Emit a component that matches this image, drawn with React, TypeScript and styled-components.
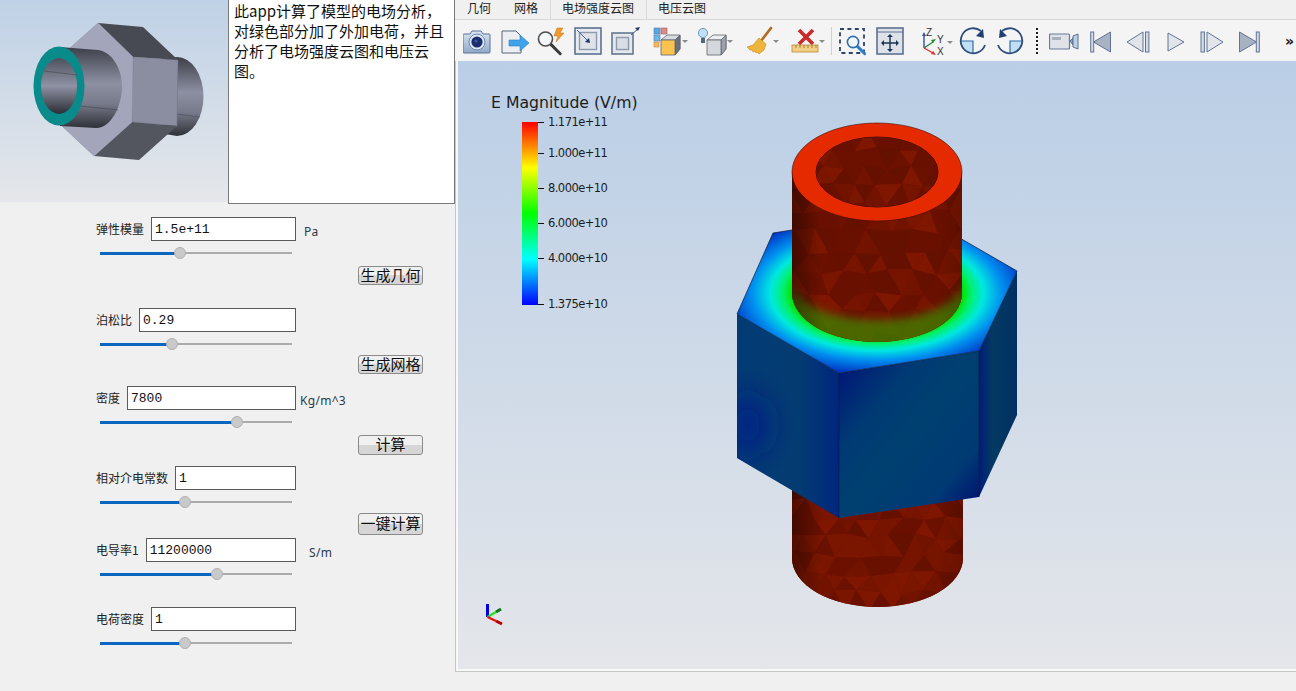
import React from 'react';
import styled, { createGlobalStyle } from 'styled-components';

const GlobalStyle = createGlobalStyle`
	html, body {
		margin: 0;
		padding: 0;
		background: #f0f0f0;
		overflow: hidden;
	}
`;

const CJK = `"Noto Sans CJK SC", "Noto Sans", sans-serif`;

const Page = styled.div`
	display: flex;
	width: 1296px;
	height: 691px;
	font-family: ${CJK};
	color: #1a1a1a;
`;

const LeftPane = styled.div`
	flex: 0 0 455px;
	display: flex;
	flex-direction: column;
`;

const TopRow = styled.div`
	display: flex;
	align-items: flex-start;
`;

const Thumb = styled.div`
	flex: 0 0 228px;
	height: 202px;
	background: linear-gradient(#bfd1e6, #e5e7ea);
	svg {
		display: block;
	}
`;

const Description = styled.div`
	box-sizing: border-box;
	width: 227px;
	height: 204px;
	padding: 1px 6px 0 5px;
	background: #fff;
	border: 1px solid #7a7a7a;
	border-top: none;
	font-size: 15px;
	line-height: 20px;
	color: #111;
	line-break: strict;
`;

const Form = styled.div`
	display: flex;
	flex-direction: column;
`;

const Row = styled.div<{ $top: number }>`
	display: flex;
	align-items: center;
	height: 24px;
	margin: ${(p) => p.$top}px 0 0 96px;
`;

const InputGroup = styled.div`
	flex: 0 0 200px;
	display: flex;
	align-items: center;
	gap: 7px;
`;

const Label = styled.label`
	flex: none;
	font-size: 12px;
	line-height: 16px;
	color: #222;
`;

const ValueInput = styled.input`
	flex: 1;
	min-width: 0;
	box-sizing: border-box;
	height: 24px;
	padding: 1px 3px 0;
	background: #fff;
	border: 1px solid #5a5a5a;
	border-radius: 0;
	outline: none;
	font-family: "Liberation Mono", monospace;
	font-size: 13px;
	color: #111;
`;

const Unit = styled.span<{ $left: number }>`
	margin: 5px 0 0 ${(p) => p.$left}px;
	font-family: "Noto Sans", sans-serif;
	font-size: 12px;
	letter-spacing: 0.3px;
	color: #2b3a4a;
	white-space: nowrap;
`;

const Slider = styled.div`
	display: flex;
	align-items: center;
	width: 192px;
	height: 12px;
	margin: 6px 0 0 100px;
`;

const SliderFill = styled.div<{ $pos: number }>`
	flex: 0 0 ${(p) => p.$pos}px;
	height: 3px;
	background: #0b66c0;
`;

const SliderHandle = styled.div`
	flex: 0 0 12px;
	height: 12px;
	margin: 0 -6px;
	box-sizing: border-box;
	position: relative;
	background: #c9c9c9;
	border: 1px solid #b0b0b0;
	border-radius: 50%;
`;

const SliderRest = styled.div`
	flex: 1;
	height: 2.5px;
	background: #ababab;
`;

const ActionRow = styled.div<{ $top: number }>`
	display: flex;
	justify-content: flex-end;
	width: 423px;
	margin-top: ${(p) => p.$top}px;
`;

const ActionButton = styled.button<{ $h: number }>`
	box-sizing: border-box;
	width: 65px;
	height: ${(p) => p.$h}px;
	padding: 0 0 4px;
	background: linear-gradient(#f0f0f0 0 50%, #d6d6d6 50% 100%);
	border: 1px solid #8a8a8a;
	border-radius: 3px;
	font-family: ${CJK};
	font-size: 15px;
	line-height: 1;
	color: #111;
`;

const RightPane = styled.div`
	flex: 1;
	display: flex;
	flex-direction: column;
	min-width: 0;
`;

const Tabs = styled.div`
	display: flex;
	height: 19px;
	padding-left: 1px;
	border-bottom: 1px solid #d8d8d8;
`;

const Tab = styled.div<{ $divided?: boolean }>`
	padding: 0 12px 0 11px;
	font-size: 12px;
	line-height: 16px;
	color: #222;
	border-left: ${(p) => (p.$divided ? '1px solid #d8d8d8' : 'none')};
`;

const Toolbar = styled.div`
	display: flex;
	align-items: center;
	height: 41px;
	padding-left: 8px;
	background: #f4f4f4;
`;

const Tool = styled.span<{ $left: number }>`
	flex: none;
	display: flex;
	margin-left: ${(p) => p.$left}px;
`;

const ThinDivider = styled.span`
	flex: none;
	width: 1px;
	height: 28px;
	margin-left: 6px;
	background: #d0d0d0;
`;

const DottedDivider = styled.span`
	flex: none;
	width: 0;
	height: 26px;
	margin-left: 12px;
	border-left: 2px dotted #1a1a1a;
`;

const More = styled.span`
	margin-left: 25px;
	font-family: "DejaVu Sans", sans-serif;
	font-size: 14px;
	font-weight: 700;
	line-height: 1;
	color: #111;
`;

const ViewportFrame = styled.div`
	box-sizing: border-box;
	height: 611px;
	padding: 0 0 2px 2px;
	background: #f8f8f8;
	border-left: 1px solid #c6c6c6;
	border-bottom: 1px solid #c6c6c6;
`;

const Viewport = styled.div`
	position: relative;
	height: 608px;
	overflow: hidden;
	background: linear-gradient(#bacee6, #e4e6ea);
	svg {
		position: absolute;
		left: 0;
		top: 0;
	}
`;

const Legend = styled.div`
	position: absolute;
	left: 33px;
	top: 33px;
	font-family: "DejaVu Sans", sans-serif;
	color: #1c1c1c;
`;

const LegendTitle = styled.div`
	font-size: 15.7px;
	line-height: 18px;
	white-space: nowrap;
`;

const LegendBody = styled.div`
	position: relative;
	width: 120px;
	height: 183px;
	margin: 10px 0 0 31px;
`;

const ColorBar = styled.div`
	width: 16px;
	height: 100%;
	background: linear-gradient(#ff0000, #ffff00 25%, #00ff00 50%, #00ffff 75%, #0000ff);
`;

const Tick = styled.div<{ $y: number }>`
	position: absolute;
	left: 16px;
	top: ${(p) => p.$y - 8}px;
	display: flex;
	align-items: center;
	gap: 4px;
	height: 16px;
	font-size: 11.5px;
	letter-spacing: -0.55px;
	white-space: nowrap;
	&::before {
		content: '';
		width: 6px;
		height: 1px;
		background: #111;
	}
`;

type IconProps = { w: number; children: React.ReactNode };

const Icon = ({ w, children }: IconProps) => (
	<svg width={w} height={30} viewBox={`0 0 ${w} 30`} fill="none">
		{children}
	</svg>
);

const Caret = ({ x }: { x: number }) => <path d={`M${x} 14h6l-3 3z`} fill="#8a8a8a" />;

const Cube = ({ x, y, face, side, top }: { x: number; y: number; face: string; side: string; top: string }) => (
	<g stroke="#5d6470" strokeWidth="0.8" strokeLinejoin="round">
		<path d={`M${x} ${y + 5}l6-5h13v14l-5 6v-15z`} fill={top} />
		<path d={`M${x + 19} ${y}v14l-5 6v-15z`} fill={side} />
		<rect x={x} y={y + 5} width={14} height={15} fill={face} />
	</g>
);

const Magnifier = ({ x, y, r, lens, handle }: { x: number; y: number; r: number; lens: string; handle: string }) => (
	<g>
		<path d={`M${x + r * 0.7} ${y + r * 0.7}L${x + r * 2.1} ${y + r * 2.1}`} stroke={handle} strokeWidth="3" strokeLinecap="round" />
		<circle cx={x} cy={y} r={r} fill="#f4f7fa" stroke={lens} strokeWidth="1.6" />
	</g>
);

const CameraIcon = () => (
	<Icon w={28}>
		<defs>
			<linearGradient id="cam" x1="0" y1="0" x2="0" y2="1">
				<stop offset="0" stopColor="#dbe6f1" />
				<stop offset="1" stopColor="#8fa9cb" />
			</linearGradient>
		</defs>
		<path d="M1 8h6l2-3h9l2 3h6a1 1 0 0 1 1 1v17a1 1 0 0 1-1 1H1a1 1 0 0 1-1-1V9a1 1 0 0 1 1-1z" fill="url(#cam)" stroke="#5b7395" />
		<circle cx="14" cy="16" r="8" fill="#dfe8f2" stroke="#6f87a8" />
		<circle cx="14" cy="16" r="5.6" fill="#1b2f6e" />
		<circle cx="13" cy="15" r="1.6" fill="#3f5aa0" />
	</Icon>
);

const ExportIcon = () => (
	<Icon w={28}>
		<path d="M1 5h14l5 5v17H1z" fill="#eceef1" stroke="#5a6678" />
		<path d="M8 14h11v-5l9 8-9 8v-5H8z" fill="#3fa2ea" stroke="#2f7fc2" strokeWidth="0.6" />
	</Icon>
);

const ZoomBoltIcon = () => (
	<Icon w={29}>
		<path d="M20 2h6l-3 5h4l-8 9 2-6h-4z" fill="#f09a2e" stroke="#c77414" strokeWidth="0.5" />
		<Magnifier x={8.5} y={13} r={7} lens="#4d4d4d" handle="#3a3a3a" />
	</Icon>
);

const ZoomInBoxIcon = () => (
	<Icon w={28}>
		<rect x="1" y="2" width="26" height="26" fill="#e8ebef" stroke="#5d7190" strokeWidth="1.6" />
		<rect x="5.5" y="6.5" width="17" height="17" fill="#dfe3e8" stroke="#8d9aae" strokeWidth="1.4" />
		<path d="M3 4L14 15" stroke="#45648f" strokeWidth="1" />
		<path d="M16 17l-1-5-4 4z" fill="#1c3768" />
	</Icon>
);

const ZoomOutBoxIcon = () => (
	<Icon w={29}>
		<rect x="1" y="7" width="21" height="21" fill="#e4e7eb" stroke="#65788f" strokeWidth="1.6" />
		<rect x="5.5" y="11.5" width="12" height="12" fill="#d9dee4" stroke="#8d9aae" strokeWidth="1.4" />
		<path d="M20 9L27 3" stroke="#45648f" strokeWidth="1" />
		<path d="M29 1l-5 1 3 3z" fill="#1c3768" />
	</Icon>
);

const ColorCubeIcon = () => (
	<Icon w={35}>
		<rect x="1" y="2" width="6" height="6" fill="#5aa6e0" stroke="#4a7eb0" strokeWidth="0.6" />
		<rect x="8" y="2" width="6" height="6" fill="#d98a8a" stroke="#a86060" strokeWidth="0.6" />
		<rect x="1" y="9" width="6" height="6" fill="#6db6e8" stroke="#4a7eb0" strokeWidth="0.6" />
		<rect x="1" y="16" width="5" height="5" fill="#f2b560" stroke="#c88a3a" strokeWidth="0.6" />
		<Cube x={8} y={9} face="#fbc24f" side="#6a6f78" top="#d7dadf" />
		<Caret x={29} />
	</Icon>
);

const LightCubeIcon = () => (
	<Icon w={35}>
		<circle cx="5" cy="7" r="4.6" fill="#bfe0f7" stroke="#6e9cc0" />
		<rect x="3" y="12" width="4" height="5" fill="#55657a" />
		<Cube x={9} y={9} face="#d4d8dc" side="#9da2aa" top="#eceef0" />
		<Caret x={29} />
	</Icon>
);

const BroomIcon = () => (
	<Icon w={33}>
		<path d="M25 2L15 15" stroke="#b26a1f" strokeWidth="2.6" strokeLinecap="round" />
		<path d="M13 12l7 6-2 6-5 4-2-2-1 1-1-2-2 1-1-2-2 0-3-3 6-2z" fill="#efb43c" stroke="#c98b1f" strokeWidth="0.6" />
		<Caret x={27} />
	</Icon>
);

const RulerIcon = () => (
	<Icon w={34}>
		<path d="M8 4l14 14M22 4L8 18" stroke="#c92a2a" strokeWidth="3.6" />
		<rect x="1" y="19" width="26" height="7" fill="#f2cf86" stroke="#b98a33" strokeWidth="0.8" />
		<path d="M5 19v3M9 19v3M13 19v3M17 19v3M21 19v3M25 19v3" stroke="#9a6f25" strokeWidth="0.8" />
		<Caret x={28} />
	</Icon>
);

const DashZoomIcon = () => (
	<Icon w={27}>
		<rect x="1" y="3" width="24" height="24" stroke="#2f4368" strokeWidth="1.8" strokeDasharray="4 3.4" />
		<Magnifier x={14} y={16} r={5.6} lens="#2f6db0" handle="#2f7fc8" />
	</Icon>
);

const FitIcon = () => (
	<Icon w={28}>
		<rect x="1" y="2" width="26" height="26" fill="#dde1e8" stroke="#5d7190" strokeWidth="1.6" />
		<path d="M1 6h26" stroke="#5d7190" strokeWidth="1" />
		<path d="M14 10v14M7 17h14" stroke="#1f3355" strokeWidth="1.4" />
		<path d="M14 8l-3 3h6zM14 26l-3-3h6zM5 17l3-3v6zM23 17l-3-3v6z" fill="#1f3355" />
	</Icon>
);

const AxesIcon = () => (
	<Icon w={33}>
		<path d="M3 22V9" stroke="#2f4fae" strokeWidth="1.4" />
		<path d="M3 6L1 10h4z" fill="#2f4fae" />
		<path d="M3 22l9-6" stroke="#1e8a3c" strokeWidth="1.4" />
		<path d="M15 13l-5 1 2 3z" fill="#1e8a3c" />
		<path d="M3 22l9 5" stroke="#d93030" strokeWidth="1.4" />
		<path d="M15 29l-5-1 2-3z" fill="#d93030" />
		<text x="5" y="10" fontFamily="Liberation Sans" fontSize="10" fill="#333">Z</text>
		<text x="16" y="17" fontFamily="Liberation Sans" fontSize="10" fill="#333">Y</text>
		<text x="16" y="29" fontFamily="Liberation Sans" fontSize="10" fill="#333">X</text>
		<path d="M26 15h6l-3 3z" fill="#8a8a8a" />
	</Icon>
);

const RotateIcon = ({ mirror }: { mirror?: boolean }) => (
	<Icon w={27}>
		<g transform={mirror ? 'translate(27 0) scale(-1 1)' : undefined}>
			<path d="M14 15H1.5a12.5 12.5 0 0 0 12.5 12.5z" fill="#bfe0f5" />
			<path d="M1.5 15H14V27" stroke="#2f6fa8" strokeWidth="1.2" />
			<path d="M22 5A12.5 12.5 0 1 0 26 19" stroke="#2e4d78" strokeWidth="1.8" />
			<path d="M25 12l-8-2 7-7z" fill="#1f3f72" />
		</g>
	</Icon>
);

const VideoIcon = () => (
	<Icon w={30}>
		<rect x="0.5" y="8" width="20" height="15" rx="1" fill="#dfe3e9" stroke="#667a98" strokeWidth="1.2" />
		<rect x="3" y="11" width="9" height="3" fill="#a9b1bd" />
		<path d="M21 15l3-3v7z" fill="#8ea7c8" stroke="#5d7190" />
		<path d="M24 10l5-2v15l-5-2z" fill="#bcd0e6" stroke="#5d7190" />
	</Icon>
);

const barStroke = '#5f7498';

const FirstIcon = () => (
	<Icon w={21}>
		<rect x="0.7" y="6" width="3" height="20" fill="#d5dae2" stroke={barStroke} />
		<path d="M3.5 16L20.5 6v20z" fill="#a9b2c0" stroke={barStroke} />
	</Icon>
);

const PrevIcon = () => (
	<Icon w={24}>
		<path d="M1 16L17 6v20z" fill="#e1e5ea" stroke={barStroke} />
		<rect x="19.5" y="6" width="3.4" height="20" fill="#d5dae2" stroke={barStroke} />
	</Icon>
);

const PlayIcon = () => (
	<Icon w={18}>
		<path d="M1 7L17 16 1 25z" fill="#e1e5ea" stroke={barStroke} />
	</Icon>
);

const NextIcon = () => (
	<Icon w={24}>
		<rect x="1" y="6" width="3.4" height="20" fill="#d5dae2" stroke={barStroke} />
		<path d="M7 6l16 10-16 10z" fill="#e1e5ea" stroke={barStroke} />
	</Icon>
);

const LastIcon = () => (
	<Icon w={21}>
		<path d="M0.5 6l17 10-17 10z" fill="#a9b2c0" stroke={barStroke} />
		<rect x="17.3" y="6" width="3" height="20" fill="#d5dae2" stroke={barStroke} />
	</Icon>
);

const firstTools = [
	{ left: 0, icon: <CameraIcon /> },
	{ left: 10, icon: <ExportIcon /> },
	{ left: 8, icon: <ZoomBoltIcon /> },
	{ left: 8, icon: <ZoomInBoxIcon /> },
	{ left: 9, icon: <ZoomOutBoxIcon /> },
	{ left: 13, icon: <ColorCubeIcon /> },
	{ left: 10, icon: <LightCubeIcon /> },
	{ left: 13, icon: <BroomIcon /> },
	{ left: 12, icon: <RulerIcon /> },
];

const secondTools = [
	{ left: 7, icon: <DashZoomIcon /> },
	{ left: 10, icon: <FitIcon /> },
	{ left: 17, icon: <AxesIcon /> },
	{ left: 5, icon: <RotateIcon /> },
	{ left: 11, icon: <RotateIcon mirror /> },
];

const thirdTools = [
	{ left: 11, icon: <VideoIcon /> },
	{ left: 11, icon: <FirstIcon /> },
	{ left: 15, icon: <PrevIcon /> },
	{ left: 17, icon: <PlayIcon /> },
	{ left: 15, icon: <NextIcon /> },
	{ left: 15, icon: <LastIcon /> },
];

const params = [
	{ label: '弹性模量', value: '1.5e+11', top: 13, pos: 80, unit: 'Pa', unitLeft: 8, action: '生成几何', actionTop: 7, actionH: 19 },
	{ label: '泊松比', value: '0.29', top: 23, pos: 72, action: '生成网格', actionTop: 5, actionH: 19 },
	{ label: '密度', value: '7800', top: 12, pos: 137, unit: 'Kg/m^3', unitLeft: 4, action: '计算', actionTop: 7, actionH: 20 },
	{ label: '相对介电常数', value: '1', top: 11, pos: 85, action: '一键计算', actionTop: 5, actionH: 22 },
	{ label: '电导率1', value: '11200000', top: 3, pos: 117, unit: 'S/m', unitLeft: 13 },
	{ label: '电荷密度', value: '1', top: 27, pos: 85 },
];

const ticks = [
	{ y: 0, text: '1.171e+11' },
	{ y: 31, text: '1.000e+11' },
	{ y: 66, text: '8.000e+10' },
	{ y: 101, text: '6.000e+10' },
	{ y: 136, text: '4.000e+10' },
	{ y: 182, text: '1.375e+10' },
];

const ThumbModel = () => (
	<svg width={228} height={202} viewBox="0 0 228 202">
		<defs>
			<linearGradient id="cyl" x1="0" y1="0" x2="0" y2="1">
				<stop offset="0" stopColor="#3d4049" />
				<stop offset="0.45" stopColor="#8d90a2" />
				<stop offset="0.7" stopColor="#777a8a" />
				<stop offset="1" stopColor="#2f3138" />
			</linearGradient>
			<linearGradient id="bore" x1="0" y1="0" x2="0" y2="1">
				<stop offset="0" stopColor="#4e515c" />
				<stop offset="0.5" stopColor="#8f92a4" />
				<stop offset="1" stopColor="#2b2d34" />
			</linearGradient>
		</defs>
		<path d="M177 57A26.5 39.5 0 0 1 177 136L165 134V58Z" fill="url(#cyl)" />
		<path d="M176 114l24 3" stroke="#4a4c56" strokeWidth="0.6" />
		<path d="M98 23L143 27 178 60 133 57z" fill="#474a53" />
		<path d="M133 57L178 60 177 126 132 122z" fill="#8b8ea0" stroke="#6b6e7e" strokeWidth="0.5" />
		<path d="M132 122L177 126 139 160 94 156z" fill="#54565f" />
		<path d="M98 23L133 57 132 122 94 156 62 126 70 48z" fill="#a3a6ba" stroke="#8a8d9e" strokeWidth="0.5" />
		<path d="M60 47L98 50C113 52 122 70 122 87S112 128 96 128L60 126z" fill="url(#cyl)" />
		<path d="M80 106L118 110" stroke="#44464f" strokeWidth="0.6" />
		<ellipse cx="59" cy="86" rx="25.5" ry="39.5" fill="#0a8b8b" />
		<ellipse cx="59" cy="86" rx="18" ry="28" fill="url(#bore)" />
		<path d="M44 71l33 4" stroke="#44464f" strokeWidth="0.6" />
	</svg>
);

// deterministic jittered triangle mesh for the tube walls
const shades = ['#761400', '#6c1100', '#7e1600', '#661000', '#721300', '#7a1500', '#6a1000'];

const buildMesh = (x0: number, y0: number, cols: number, rows: number, size: number, seed: number) => {
	const rand = (n: number) => {
		const v = Math.sin(n * 12.9898 + seed) * 43758.5453;
		return v - Math.floor(v);
	};
	const point = (c: number, r: number) => {
		const n = c * 31 + r * 17;
		const offset = r % 2 ? size / 2 : 0;
		return [x0 + c * size + offset + (rand(n) - 0.5) * size * 0.3, y0 + r * size * 0.85 + (rand(n + 5) - 0.5) * size * 0.3];
	};
	const polys: { d: string; fill: string }[] = [];
	for (let r = 0; r < rows; r++) {
		for (let c = 0; c < cols; c++) {
			const a = point(c, r);
			const b = point(c + 1, r);
			const d = point(c, r + 1);
			const e = point(c + 1, r + 1);
			const odd = r % 2 === 1;
			const first = odd ? `${a} ${e} ${d}` : `${a} ${b} ${d}`;
			const second = odd ? `${a} ${b} ${e}` : `${b} ${e} ${d}`;
			polys.push({ d: first, fill: shades[Math.floor(rand(c * 7 + r * 3 + 1) * shades.length)] });
			polys.push({ d: second, fill: shades[Math.floor(rand(c * 5 + r * 11 + 2) * shades.length)] });
		}
	}
	return polys;
};

const upperMesh = buildMesh(770, 190, 9, 8, 24, 3);
const lowerMesh = buildMesh(770, 480, 9, 7, 22, 8);
const boreMesh = buildMesh(800, 130, 7, 5, 22, 5);

const Mesh = ({ polys }: { polys: { d: string; fill: string }[] }) => (
	<>
		{polys.map((p, i) => (
			<polygon key={i} points={p.d} fill={p.fill} />
		))}
	</>
);

const FieldModel = () => (
	<svg width={838} height={608} viewBox="458 61 838 608">
		<defs>
			<radialGradient id="topFace" gradientUnits="userSpaceOnUse" cx="0" cy="0" r="1" gradientTransform="translate(877 293) scale(152 82)">
				<stop offset="0.56" stopColor="#00e400" />
				<stop offset="0.62" stopColor="#00f070" />
				<stop offset="0.7" stopColor="#00e8e0" />
				<stop offset="0.82" stopColor="#0090f0" />
				<stop offset="1" stopColor="#0030c0" />
			</radialGradient>
			<linearGradient id="leftFace" x1="0" y1="0" x2="1" y2="0">
				<stop offset="0" stopColor="#023a74" />
				<stop offset="0.6" stopColor="#043c72" />
				<stop offset="1" stopColor="#00267e" />
			</linearGradient>
			<linearGradient id="midFace" x1="0" y1="0" x2="1" y2="1">
				<stop offset="0" stopColor="#000f78" />
				<stop offset="0.3" stopColor="#003a74" />
				<stop offset="0.5" stopColor="#004070" />
				<stop offset="0.78" stopColor="#003a74" />
				<stop offset="1" stopColor="#000a70" />
			</linearGradient>
			<linearGradient id="rightFace" x1="0" y1="0" x2="1" y2="0">
				<stop offset="0" stopColor="#001c7a" />
				<stop offset="0.35" stopColor="#033a62" />
				<stop offset="1" stopColor="#022f62" />
			</linearGradient>
			<linearGradient id="wallShade" x1="0" y1="0" x2="1" y2="0">
				<stop offset="0" stopColor="#000" stopOpacity="0.4" />
				<stop offset="0.18" stopColor="#000" stopOpacity="0" />
				<stop offset="0.85" stopColor="#000" stopOpacity="0" />
				<stop offset="1" stopColor="#000" stopOpacity="0.15" />
			</linearGradient>
			<clipPath id="upperTube">
				<path d="M792 172V293A85 49 0 0 0 962 293V172Z" />
			</clipPath>
			<clipPath id="lowerTube">
				<path d="M792 490V558A85.5 49 0 0 0 963 558V490Z" />
			</clipPath>
			<clipPath id="boreHole">
				<ellipse cx="877" cy="172" rx="61" ry="35" />
			</clipPath>
			<clipPath id="leftClip">
				<path d="M737 314L839 373V518L737 458Z" />
			</clipPath>
			<filter id="soft" x="-20%" y="-50%" width="140%" height="200%">
				<feGaussianBlur stdDeviation="4" />
			</filter>
			<filter id="softer" x="-150%" y="-150%" width="400%" height="400%">
				<feGaussianBlur stdDeviation="14" />
			</filter>
		</defs>

		<g clipPath="url(#lowerTube)">
			<rect x="790" y="485" width="175" height="125" fill="#741300" />
			<Mesh polys={lowerMesh} />
			<rect x="790" y="485" width="175" height="125" fill="url(#wallShade)" />
		</g>

		<path d="M737 314L839 373V518L737 458Z" fill="url(#leftFace)" />
		<g clipPath="url(#leftClip)">
			<ellipse cx="748" cy="425" rx="22" ry="30" fill="#001a8a" fillOpacity="0.75" filter="url(#softer)" />
		</g>
		<path d="M839 373L979 351V497L839 518Z" fill="url(#midFace)" />
		<path d="M979 351L1017 271V415L979 497Z" fill="url(#rightFace)" />
		<path d="M737 314L773 233L913 211L1017 271L979 351L839 373Z" fill="url(#topFace)" stroke="#0a1a3a" strokeWidth="0.7" />
		<path d="M839 373V518M979 351V497" stroke="#0a1a3a" strokeWidth="0.7" />

		<g clipPath="url(#upperTube)">
			<rect x="790" y="170" width="175" height="175" fill="#741300" />
			<Mesh polys={upperMesh} />
			<path d="M790 280A87 40 0 0 0 964 280L970 365H784Z" fill="#3a8a00" fillOpacity="0.7" filter="url(#soft)" />
			<rect x="790" y="170" width="175" height="175" fill="url(#wallShade)" />
		</g>

		<ellipse cx="877" cy="172" rx="85" ry="49" fill="#e52a00" stroke="#3a0c00" strokeWidth="0.6" />
		<ellipse cx="877" cy="172" rx="61" ry="35" fill="#6a1000" stroke="#2a0800" strokeWidth="0.8" />
		<g clipPath="url(#boreHole)">
			<Mesh polys={boreMesh} />
		</g>

		<path d="M487.5 617V604" stroke="#0000e6" strokeWidth="3" />
		<path d="M487.5 617L496 612" stroke="#22e022" strokeWidth="2.4" />
		<path d="M496 612L501 609" stroke="#0c7a1c" strokeWidth="3" />
		<path d="M487.5 617L496 621" stroke="#e61010" strokeWidth="2.4" />
		<path d="M496 621L502 624" stroke="#b00000" strokeWidth="3" />
	</svg>
);

const App = () => (
	<>
		<GlobalStyle />
		<Page>
			<LeftPane>
				<TopRow>
					<Thumb>
						<ThumbModel />
					</Thumb>
					<Description>此app计算了模型的电场分析，对绿色部分加了外加电荷，并且分析了电场强度云图和电压云图。</Description>
				</TopRow>
				<Form>
					{params.map((p) => (
						<React.Fragment key={p.label}>
							<Row $top={p.top}>
								<InputGroup>
									<Label>{p.label}</Label>
									<ValueInput defaultValue={p.value} readOnly />
								</InputGroup>
								{p.unit && <Unit $left={p.unitLeft}>{p.unit}</Unit>}
							</Row>
							<Slider>
								<SliderFill $pos={p.pos} />
								<SliderHandle />
								<SliderRest />
							</Slider>
							{p.action && (
								<ActionRow $top={p.actionTop}>
									<ActionButton $h={p.actionH}>{p.action}</ActionButton>
								</ActionRow>
							)}
						</React.Fragment>
					))}
				</Form>
			</LeftPane>
			<RightPane>
				<Tabs>
					<Tab>几何</Tab>
					<Tab>网格</Tab>
					<Tab $divided>电场强度云图</Tab>
					<Tab $divided>电压云图</Tab>
				</Tabs>
				<Toolbar>
					{firstTools.map((t, i) => (
						<Tool key={i} $left={t.left}>
							{t.icon}
						</Tool>
					))}
					<ThinDivider />
					{secondTools.map((t, i) => (
						<Tool key={i} $left={t.left}>
							{t.icon}
						</Tool>
					))}
					<DottedDivider />
					{thirdTools.map((t, i) => (
						<Tool key={i} $left={t.left}>
							{t.icon}
						</Tool>
					))}
					<More>»</More>
				</Toolbar>
				<ViewportFrame>
					<Viewport>
						<FieldModel />
						<Legend>
							<LegendTitle>E Magnitude (V/m)</LegendTitle>
							<LegendBody>
								<ColorBar />
								{ticks.map((t) => (
									<Tick key={t.text} $y={t.y}>
										{t.text}
									</Tick>
								))}
							</LegendBody>
						</Legend>
					</Viewport>
				</ViewportFrame>
			</RightPane>
		</Page>
	</>
);

export default App;
